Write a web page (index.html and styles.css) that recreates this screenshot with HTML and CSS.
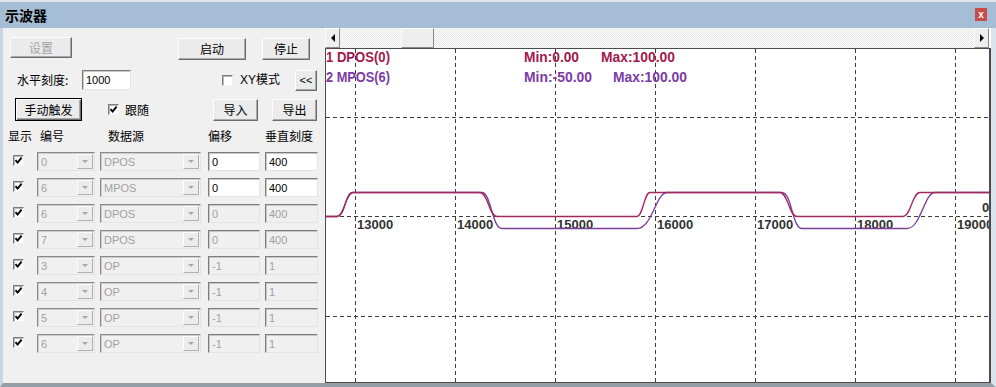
FILE: index.html
```html
<!DOCTYPE html>
<html lang="zh">
    <head>
        <meta charset="UTF-8" />
        <title>示波器</title>
        <link rel="stylesheet" href="styles.css">
    </head>
    <body>
        <div class="window">
            <div class="titlebar">
                <span class="title">示波器</span>
                <span class="close">x</span>
            </div>
            <div class="main">
                <div class="panel">
                    <div class="row row-top">
                        <div class="btn btn-set off">设置</div>
                        <div class="btn btn-start">启动</div>
                        <div class="btn btn-stop">停止</div>
                    </div>
                    <div class="row row-scale">
                        <span class="lbl lbl-scale">水平刻度:</span>
                        <span class="edit edit-scale">1000</span>
                        <span class="check chk-xy"></span>
                        <span class="lbl lbl-xy">XY模式</span>
                        <div class="btn btn-back">&lt;&lt;</div>
                    </div>
                    <div class="row row-trig">
                        <div class="btn btn-trig">手动触发</div>
                        <span class="check chk-follow"><svg viewBox="0 0 9 9"><path d="M1.5 4.2 L3.6 6.6 L7.6 1.6" /></svg></span>
                        <span class="lbl lbl-follow">跟随</span>
                        <div class="btn btn-imp">导入</div>
                        <div class="btn btn-exp">导出</div>
                    </div>
                    <div class="row row-head">
                        <span class="h-show">显示</span>
                        <span class="h-num">编号</span>
                        <span class="h-src">数据源</span>
                        <span class="h-off">偏移</span>
                        <span>垂直刻度</span>
                    </div>
                    <div class="table">
                        <div class="trow">
                            <span class="check"><svg viewBox="0 0 9 9"><path d="M1.5 4.2 L3.6 6.6 L7.6 1.6" /></svg></span>
                            <div class="combo combo-num"><span class="val">0</span><span class="arrow"></span></div>
                            <div class="combo combo-src"><span class="val">DPOS</span><span class="arrow"></span></div>
                            <span class="edit edit-off">0</span>
                            <span class="edit edit-scale2">400</span>
                        </div>
                        <div class="trow">
                            <span class="check"><svg viewBox="0 0 9 9"><path d="M1.5 4.2 L3.6 6.6 L7.6 1.6" /></svg></span>
                            <div class="combo combo-num"><span class="val">6</span><span class="arrow"></span></div>
                            <div class="combo combo-src"><span class="val">MPOS</span><span class="arrow"></span></div>
                            <span class="edit edit-off">0</span>
                            <span class="edit edit-scale2">400</span>
                        </div>
                        <div class="trow">
                            <span class="check"><svg viewBox="0 0 9 9"><path d="M1.5 4.2 L3.6 6.6 L7.6 1.6" /></svg></span>
                            <div class="combo combo-num"><span class="val">6</span><span class="arrow"></span></div>
                            <div class="combo combo-src"><span class="val">DPOS</span><span class="arrow"></span></div>
                            <span class="edit edit-off off">0</span>
                            <span class="edit edit-scale2 off">400</span>
                        </div>
                        <div class="trow">
                            <span class="check"><svg viewBox="0 0 9 9"><path d="M1.5 4.2 L3.6 6.6 L7.6 1.6" /></svg></span>
                            <div class="combo combo-num"><span class="val">7</span><span class="arrow"></span></div>
                            <div class="combo combo-src"><span class="val">DPOS</span><span class="arrow"></span></div>
                            <span class="edit edit-off off">0</span>
                            <span class="edit edit-scale2 off">400</span>
                        </div>
                        <div class="trow">
                            <span class="check"><svg viewBox="0 0 9 9"><path d="M1.5 4.2 L3.6 6.6 L7.6 1.6" /></svg></span>
                            <div class="combo combo-num"><span class="val">3</span><span class="arrow"></span></div>
                            <div class="combo combo-src"><span class="val">OP</span><span class="arrow"></span></div>
                            <span class="edit edit-off off">-1</span>
                            <span class="edit edit-scale2 off">1</span>
                        </div>
                        <div class="trow">
                            <span class="check"><svg viewBox="0 0 9 9"><path d="M1.5 4.2 L3.6 6.6 L7.6 1.6" /></svg></span>
                            <div class="combo combo-num"><span class="val">4</span><span class="arrow"></span></div>
                            <div class="combo combo-src"><span class="val">OP</span><span class="arrow"></span></div>
                            <span class="edit edit-off off">-1</span>
                            <span class="edit edit-scale2 off">1</span>
                        </div>
                        <div class="trow">
                            <span class="check"><svg viewBox="0 0 9 9"><path d="M1.5 4.2 L3.6 6.6 L7.6 1.6" /></svg></span>
                            <div class="combo combo-num"><span class="val">5</span><span class="arrow"></span></div>
                            <div class="combo combo-src"><span class="val">OP</span><span class="arrow"></span></div>
                            <span class="edit edit-off off">-1</span>
                            <span class="edit edit-scale2 off">1</span>
                        </div>
                        <div class="trow">
                            <span class="check"><svg viewBox="0 0 9 9"><path d="M1.5 4.2 L3.6 6.6 L7.6 1.6" /></svg></span>
                            <div class="combo combo-num"><span class="val">6</span><span class="arrow"></span></div>
                            <div class="combo combo-src"><span class="val">OP</span><span class="arrow"></span></div>
                            <span class="edit edit-off off">-1</span>
                            <span class="edit edit-scale2 off">1</span>
                        </div>
                    </div>
                </div>

                <div class="scope">
                    <div class="hscroll">
                        <div class="sb-btn"><span class="tri-left"></span></div>
                        <div class="sb-thumb"></div>
                        <div class="sb-btn sb-right"><span class="tri-right"></span></div>
                    </div>
                    <div class="plot">
                        <svg width="663" height="333" viewBox="0 0 663 333">
                            <!-- grid -->
                            <g class="grid">
                                <line x1="29.5" y1="0" x2="29.5" y2="333" />
                                <line x1="129.5" y1="0" x2="129.5" y2="333" />
                                <line x1="229.5" y1="0" x2="229.5" y2="333" />
                                <line x1="329.5" y1="0" x2="329.5" y2="333" />
                                <line x1="429.5" y1="0" x2="429.5" y2="333" />
                                <line x1="529.5" y1="0" x2="529.5" y2="333" />
                                <line x1="629.5" y1="0" x2="629.5" y2="333" />
                                <line x1="0" y1="68.5" x2="663" y2="68.5" />
                                <line x1="0" y1="167.5" x2="663" y2="167.5" />
                                <line x1="0" y1="267.5" x2="663" y2="267.5" />
                            </g>
                            <g class="ticks">
                                <text x="31" y="180">13000</text>
                                <text x="131" y="180">14000</text>
                                <text x="231" y="180">15000</text>
                                <text x="331" y="180">16000</text>
                                <text x="431" y="180">17000</text>
                                <text x="531" y="180">18000</text>
                                <text x="631" y="180">19000</text>
                                <text x="656" y="163">0</text>
                            </g>
                            <!-- traces -->
                            <path class="trace t-m" d="M0,167.5 H11 C19,167.5 19,143.5 27,143.5 H156 C165,143.5 166,179.5 176,179.5 H311 C326,179.5 330,143.5 341,143.5 H456 C466,143.5 466,179.5 476,179.5 H581 C595,179.5 598,143.5 609,143.5 H663" />
                            <path class="trace t-d" d="M0,167.5 H11 C19,167.5 19,143.5 27,143.5 H154 C162,143.5 163,167.5 171,167.5 H311 C317,167.5 318,143.5 324,143.5 H454 C462,143.5 463,167.5 471,167.5 H577 C585,167.5 586,143.5 594,143.5 H663" />
                            <!-- legend -->
                            <g class="legend">
                                <text class="l-d" x="0" y="13" textLength="64" lengthAdjust="spacingAndGlyphs">1 DPOS(0)</text>
                                <text class="l-d" x="198" y="13" textLength="55" lengthAdjust="spacingAndGlyphs">Min:0.00</text>
                                <text class="l-d" x="275" y="13" textLength="74" lengthAdjust="spacingAndGlyphs">Max:100.00</text>
                                <text class="l-m" x="0" y="33" textLength="64" lengthAdjust="spacingAndGlyphs">2 MPOS(6)</text>
                                <text class="l-m" x="198" y="33" textLength="68" lengthAdjust="spacingAndGlyphs">Min:-50.00</text>
                                <text class="l-m" x="287" y="33" textLength="74" lengthAdjust="spacingAndGlyphs">Max:100.00</text>
                            </g>
                        </svg>
                    </div>
                </div>
            </div>
        </div>
    </body>
</html>
```

FILE: styles.css
```css
body {
    margin: 0;
    background: #fff;
    font-family: "Noto Sans CJK SC", sans-serif;
    font-size: 12px;
    line-height: 1;
    color: #000;
}

.window {
    width: 996px;
    height: 387px;
    display: flex;
    flex-direction: column;
    overflow: hidden;
}

/* title bar */
.titlebar {
    height: 26px;
    flex: none;
    border-top: 2px solid #dce5ee;
    background: #a6bdd6;
    display: flex;
    align-items: center;
    justify-content: space-between;
    padding: 0 9px 0 5px;
}
.title {
    font-weight: 700;
    font-size: 14px;
}
.close {
    width: 12px;
    height: 13px;
    background: #c94c4c;
    color: #fff;
    font: bold 10px "Liberation Sans", sans-serif;
    display: flex;
    align-items: center;
    justify-content: center;
    margin-top: -1px;
}

.main {
    flex: 1;
    display: flex;
    border-left: 3px solid #c7d6e6;
    border-right: 5px solid #dbe3ec;
    border-bottom: 4px solid #959da6;
}

/* left panel */
.panel {
    width: 322px;
    flex: none;
    background: #f0f0f0;
}
.row {
    display: flex;
    align-items: center;
}
.btn {
    box-sizing: border-box;
    display: flex;
    align-items: center;
    justify-content: center;
    background: #ebebeb;
    border: 1px solid;
    border-color: #fdfdfd #6b6b6b #6b6b6b #fdfdfd;
    box-shadow: inset -1px -1px #a9a9a9;
    font-size: 12px;
}
.btn.off {
    color: #a3a3a3;
}
.lbl {
    white-space: nowrap;
}
.edit {
    box-sizing: border-box;
    display: flex;
    align-items: center;
    height: 20px;
    padding-left: 3px;
    background: #fff;
    border: 1px solid;
    border-color: #7c7c7c #e4e4e4 #e4e4e4 #7c7c7c;
    box-shadow: inset 1px 1px #c8c8c8;
    font: 11px "Liberation Sans", sans-serif;
}
.edit.off {
    background: #f0f0f0;
    color: #a0a0a0;
}
.check {
    box-sizing: border-box;
    width: 11px;
    height: 11px;
    flex: none;
    background: #fff;
    border: 1px solid;
    border-color: #7c7c7c #f4f4f4 #f4f4f4 #7c7c7c;
    box-shadow: inset 1px 1px #b8b8b8;
    display: flex;
}
.check svg {
    width: 9px;
    height: 9px;
}
.check path {
    fill: none;
    stroke: #000;
    stroke-width: 1.9;
}

.row-top {
    margin-top: 9px;
    padding-left: 7px;
    height: 23px;
    align-items: flex-start;
}
.btn-set {
    width: 62px;
    height: 21px;
}
.btn-start {
    margin: 1px 0 0 106px;
    width: 68px;
    height: 22px;
}
.btn-stop {
    margin: 1px 0 0 16px;
    width: 48px;
    height: 22px;
}

.row-scale {
    margin-top: 9px;
    height: 22px;
}
.lbl-scale {
    margin-left: 14px;
    width: 65px;
}
.edit-scale {
    width: 49px;
}
.chk-xy {
    margin-left: 91px;
}
.lbl-xy {
    margin-left: 7px;
    width: 55px;
    font-family: "Liberation Sans", "Noto Sans CJK SC", sans-serif;
}
.btn-back {
    width: 22px;
    height: 21px;
    font: 11px "Liberation Sans", sans-serif;
}

.row-trig {
    margin-top: 7px;
    height: 23px;
}
.btn-trig {
    margin-left: 12px;
    width: 67px;
    height: 23px;
    border: 1px solid #000;
    box-shadow: inset 1px 1px #fdfdfd, inset -1px -1px #6b6b6b, inset -2px -2px #a9a9a9;
}
.chk-follow {
    margin-left: 26px;
}
.lbl-follow {
    margin-left: 6px;
    width: 88px;
}
.btn-imp {
    width: 45px;
    height: 22px;
}
.btn-exp {
    margin-left: 14px;
    width: 45px;
    height: 22px;
}

.row-head {
    margin-top: 7px;
    height: 16px;
    padding-left: 5px;
}
.h-show { width: 32px; }
.h-num { width: 68px; }
.h-src { width: 100px; }
.h-off { width: 57px; }

.table {
    margin-top: 8px;
    display: flex;
    flex-direction: column;
    gap: 7px;
}
.trow {
    display: flex;
    align-items: flex-start;
    height: 19px;
}
.trow .check {
    margin: 3px 0 0 10px;
}
.combo {
    box-sizing: border-box;
    height: 19px;
    display: flex;
    align-items: center;
    background: #f0f0f0;
    border: 1px solid;
    border-color: #8a8a8a #e4e4e4 #e4e4e4 #8a8a8a;
    box-shadow: inset 1px 1px #cdcdcd;
    font: 11px "Liberation Sans", sans-serif;
    color: #a0a0a0;
}
.combo .val {
    flex: 1;
    padding-left: 3px;
}
.combo .arrow {
    box-sizing: border-box;
    width: 16px;
    height: 15px;
    margin-right: 1px;
    background: #ececec;
    border: 1px solid;
    border-color: #fdfdfd #b0b0b0 #b0b0b0 #fdfdfd;
    display: flex;
    align-items: center;
    justify-content: center;
}
.combo .arrow::after {
    content: "";
    border-left: 3px solid transparent;
    border-right: 3px solid transparent;
    border-top: 3px solid #a6a6a6;
}
.combo-num {
    margin-left: 13px;
    width: 58px;
}
.combo-src {
    margin-left: 5px;
    width: 101px;
}
.edit-off {
    margin-left: 7px;
    width: 52px;
    height: 19px;
}
.edit-scale2 {
    margin-left: 5px;
    width: 53px;
    height: 19px;
}

/* scope side */
.scope {
    flex: 1;
    display: flex;
    flex-direction: column;
}
.hscroll {
    height: 20px;
    flex: none;
    margin-right: 2px;
    display: flex;
    background: repeating-conic-gradient(#e8e8e8 0 25%, #fbfbfb 0 50%) 0 0 / 2px 2px;
}
.sb-btn,
.sb-thumb {
    box-sizing: border-box;
    height: 20px;
    background: #eeeeee;
    border: 1px solid;
    border-color: #fdfdfd #8a8a8a #8a8a8a #fdfdfd;
    display: flex;
    align-items: center;
    justify-content: center;
}
.sb-btn {
    width: 15px;
}
.sb-thumb {
    margin-left: 61px;
    width: 33px;
}
.sb-right {
    margin-left: auto;
}
.tri-left {
    border-top: 4px solid transparent;
    border-bottom: 4px solid transparent;
    border-right: 4px solid #000;
}
.tri-right {
    border-top: 4px solid transparent;
    border-bottom: 4px solid transparent;
    border-left: 4px solid #000;
}

.plot {
    flex: 1;
    background: #fff;
    border: 1px solid #4c4c4c;
    border-right-width: 2px;
    overflow: hidden;
}
.plot svg {
    display: block;
}
.grid line {
    stroke: #3c3c3c;
    stroke-width: 1;
    stroke-dasharray: 4 3;
    shape-rendering: crispEdges;
}
.ticks text {
    font: bold 13px "Liberation Sans", sans-serif;
    fill: #333;
}
.trace {
    fill: none;
    stroke-width: 1.3;
}
.t-d {
    stroke: #a2275c;
}
.t-m {
    stroke: #7a3f99;
}
.legend text {
    font: bold 14px "Liberation Sans", sans-serif;
}
.l-d {
    fill: #a3194d;
}
.l-m {
    fill: #7c3aa6;
}
```
